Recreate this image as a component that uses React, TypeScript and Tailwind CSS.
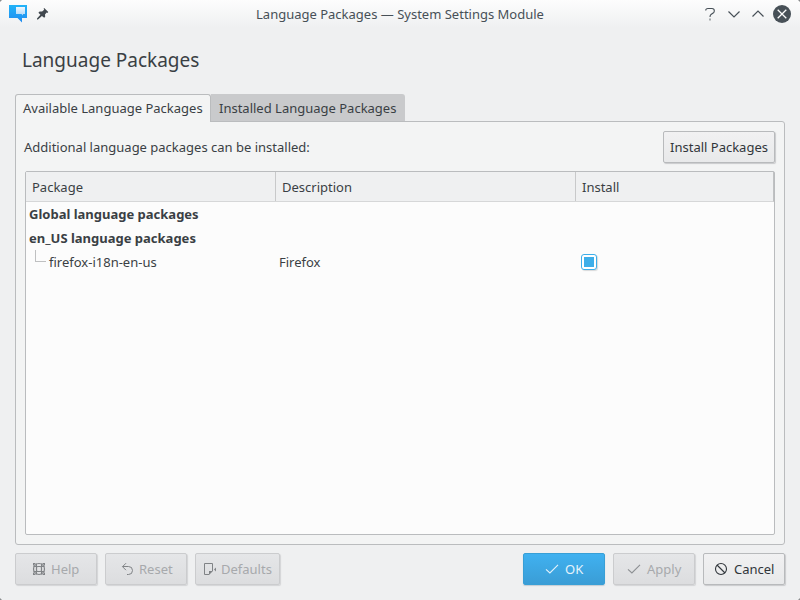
import type { ReactNode } from 'react';

const disabledBtn =
  'border-[#cbccce] bg-linear-to-b from-[#e5e6e8] to-[#dcdddf] text-[#a7a9ac] shadow-[1px_1px_1px_#d3d4d6]';
const normalBtn =
  'border-[#b8babc] bg-linear-to-b from-[#f1f1f2] to-[#e8e9ea] text-[#31363b] shadow-[1px_1px_1px_#c9cacc]';
const primaryBtn =
  'border-[#389fd6] bg-linear-to-b from-[#40b1f0] to-[#3a9dd6] text-[#e6f3fb] shadow-[0_1px_1px_#c3cdd4]';

function Button({ tone, size, children }: { tone: string; size: string; children: ReactNode }) {
  return (
    <button className={`flex h-8 items-center rounded-[2px] border ${size} ${tone}`}>
      {children}
    </button>
  );
}

function Check({ color }: { color: string }) {
  return (
    <svg width="14" height="14" viewBox="0 0 14 14" fill="none" stroke={color} strokeWidth="1.1">
      <path d="M1 7.3 4.9 11 13 2.9" />
    </svg>
  );
}

function TitleBar() {
  return (
    <header className="flex h-7 items-center bg-linear-to-b from-[#fdfdfd] to-[#eff0f1] pr-[9px] pl-2 text-[#475057]">
      <div className="flex w-[185px] items-center gap-2">
        <svg width="20" height="20" viewBox="0 0 20 20">
          <defs>
            <linearGradient id="blue" x1="0" y1="0" x2="0" y2="1">
              <stop offset="0" stopColor="#22b4f8" />
              <stop offset="1" stopColor="#218bf0" />
            </linearGradient>
            <linearGradient id="pale" x1="0" y1="0" x2="0" y2="1">
              <stop offset="0" stopColor="#eef7fe" />
              <stop offset="1" stopColor="#b0d8f8" />
            </linearGradient>
          </defs>
          <path d="M1 1H19V14H14V18.5L9.5 14H1Z" fill="url(#blue)" />
          <path d="M8 3H17V10H15V11.5L13.5 10H8Z" fill="url(#pale)" />
        </svg>
        <svg width="14" height="14" viewBox="0 0 14 14" fill="#41484e">
          <path d="M8.2 1 12.3 5.1 11.3 5.9 10.6 5.5 9 7.5 9.2 9.8 8.2 10.8 5.9 9.1 2 12.4 1 12.4 1 11.6 4.4 7.8 2.4 5.8 3.6 4.5 6.1 4.6 8.2 2.8 7.6 1.8Z" />
        </svg>
      </div>
      <div className="flex-1 text-center">Language Packages — System Settings Module</div>
      <div className="flex w-[184px] items-center justify-end gap-1.5">
        <svg width="18" height="18" viewBox="0 0 18 18" fill="none" stroke="currentColor" strokeWidth="1.1">
          <path d="M4.7 5.5Q4.7 3.5 7 3.5H11Q13.3 3.5 13.3 5.8Q13.3 7.2 12.5 7.8L10 9.5Q9 10.2 9 12" />
          <path d="M8 14.5H10" strokeWidth="1.8" opacity=".45" />
        </svg>
        <svg width="18" height="18" viewBox="0 0 18 18" fill="none" stroke="currentColor" strokeWidth="1.2">
          <path d="M3.5 6.5 9 12 14.5 6.5" />
        </svg>
        <svg width="18" height="18" viewBox="0 0 18 18" fill="none" stroke="currentColor" strokeWidth="1.2">
          <path d="M3.5 11.5 9 6 14.5 11.5" />
        </svg>
        <svg width="18" height="18" viewBox="0 0 18 18">
          <circle cx="9" cy="9" r="9" fill="#475057" />
          <path d="M4.7 4.7 13.3 13.3M13.3 4.7 4.7 13.3" stroke="#fcfcfc" strokeWidth="1.3" />
        </svg>
      </div>
    </header>
  );
}

function PackageTable() {
  return (
    <div className="flex h-[364px] flex-col rounded-[2px] border border-[#babcbe] bg-[#fcfcfc]">
      <div className="flex h-[30px] shrink-0 items-center border-r border-b border-r-[#bfc1c2] border-b-[#d6d7d8] bg-[#eff0f1]">
        <div className="flex h-full w-[250px] items-center border-r border-[#c8c9ca] pl-1.5">Package</div>
        <div className="flex h-full w-[300px] items-center border-r border-[#c8c9ca] pl-1.5">Description</div>
        <div className="pl-1.5">Install</div>
      </div>
      <div className="flex h-6 items-center pl-[3px] font-bold">Global language packages</div>
      <div className="flex h-6 items-center pl-[3px] font-bold">en_US language packages</div>
      <div className="flex h-6 items-center">
        <div className="flex w-[253px] items-center pl-[9px]">
          <div className="mr-[3px] mb-[12px] h-[12px] w-[11px] border-b border-l border-[#bfc0c1]" />
          firefox-i18n-en-us
        </div>
        <div className="w-[302px]">Firefox</div>
        <div className="flex size-4 items-center justify-center rounded-[3px] border border-[#3daee9] bg-white shadow-[1px_1px_1px_#d8d9da]">
          <div className="size-[10px] bg-[#3daee9]" />
        </div>
      </div>
    </div>
  );
}

export default function App() {
  return (
    <div className="relative flex h-[600px] w-[800px] flex-col overflow-hidden bg-[#eff0f1] font-['Noto_Sans',sans-serif] text-[13px] leading-[18px] whitespace-nowrap text-[#3a3f44]">
      <TitleBar />
      <h1 className="mt-[18px] h-12 pl-[22px] text-[19px] leading-7">Language Packages</h1>
      <main className="mx-[15px] flex flex-col">
        <div className="z-10 -mb-px flex h-7">
          <div className="flex w-[196px] items-center rounded-t-[3px] border border-b-0 border-[#babcbe] bg-[#f3f4f4] pb-[2px] pl-[7px]">
            Available Language Packages
          </div>
          <div className="flex h-[27px] w-[194px] items-center rounded-tr-[3px] bg-[#c9cacc] pt-px pl-2">
            Installed Language Packages
          </div>
        </div>
        <section className="h-[424px] rounded-[3px] rounded-tl-none border border-[#babcbe] bg-[#f3f4f4] px-[9px] pt-[9px]">
          <div className="mb-2 flex h-8 items-center justify-between">
            <span className="-ml-px">Additional language packages can be installed:</span>
            <Button tone={normalBtn} size="w-28 justify-center">Install Packages</Button>
          </div>
          <PackageTable />
        </section>
      </main>
      <footer className="mx-[15px] mt-2 flex gap-2">
        <Button tone={disabledBtn} size="w-[82px] gap-[5px] pl-4">
          <svg width="14" height="14" viewBox="0 0 14 14" fill="none" stroke="#808386">
            <circle cx="7" cy="7" r="5.5" strokeWidth="1.2" />
            <rect x="4.5" y="4.5" width="5" height="5" rx="1.2" strokeWidth="1.2" />
            <path d="M1.5 4.5H5M1.5 9.5H5M9 4.5H12.5M9 9.5H12.5M4.5 1.5V5M9.5 1.5V5M4.5 9V12.5M9.5 9V12.5" />
            <path d="M1 1H4L1 4ZM13 1V4L10 1ZM13 13H10L13 10ZM1 13V10L4 13Z" fill="#808386" stroke="none" />
          </svg>
          Help
        </Button>
        <Button tone={disabledBtn} size="w-[82px] gap-1 pl-[15px]">
          <svg width="14" height="14" viewBox="0 0 14 14" fill="none" stroke="#808386">
            <path d="M5 1.2 1.5 4.7 5 8.2M1.5 4.5H7.5A4 4 0 0 1 7.5 12.5H6" />
          </svg>
          Reset
        </Button>
        <Button tone={disabledBtn} size="w-[85px] gap-1 pl-[7px]">
          <svg width="14" height="14" viewBox="0 0 14 14" fill="none" stroke="#808386">
            <path d="M6 12.5H1.5V1.5H9.5V9" />
            <path d="M6 13V9H10Z" fill="#808386" stroke="none" />
            <path d="M13 5.5V9.5L11 7.5Z" fill="#808386" stroke="none" />
          </svg>
          Defaults
        </Button>
        <div className="flex-1" />
        <Button tone={primaryBtn} size="w-[82px] gap-1.5 pl-[21px]">
          <Check color="#e6f3fb" />
          OK
        </Button>
        <Button tone={disabledBtn} size="w-[82px] gap-1.5 pl-[13px]">
          <Check color="#8c8f92" />
          Apply
        </Button>
        <Button tone={normalBtn} size="w-[82px] gap-1.5 pl-2.5">
          <svg width="14" height="14" viewBox="0 0 14 14" fill="none" stroke="currentColor" strokeWidth="1.1">
            <circle cx="7" cy="7" r="5.5" />
            <path d="M3 3 11 11" />
          </svg>
          Cancel
        </Button>
      </footer>
      <svg className="pointer-events-none absolute inset-0" width="800" height="600" fill="#8a8c8e">
        <path d="M0 0H2L0 2ZM800 0V2L798 0ZM0 600V598L2 600ZM800 600H798L800 598Z" />
      </svg>
    </div>
  );
}
